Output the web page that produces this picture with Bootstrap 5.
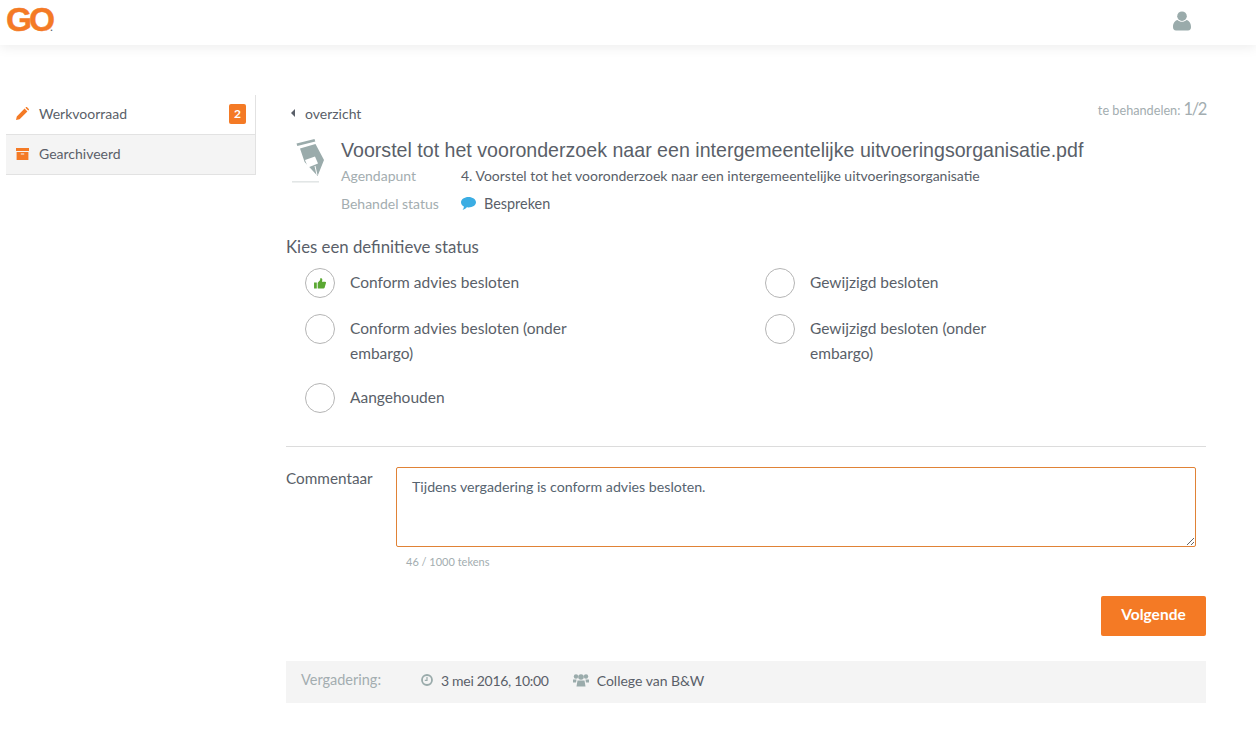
<!DOCTYPE html>
<html lang="nl">
<head>
    <meta charset="UTF-8">
    <title>GO</title>
    <link rel="stylesheet" href="https://cdn.jsdelivr.net/npm/bootstrap@5.3.0/dist/css/bootstrap.min.css">
    <style>
        body { font-family: Lato, "Open Sans", sans-serif; font-size: 15.5px; color: #5a5f69; background: #fff; }
        .topbar { height: 45px; box-shadow: 0 2px 12px rgba(0,0,0,.08); padding: 0 0 0 6px; }
        .logo-go { font-family: "Liberation Sans", sans-serif; font-weight: 700; font-size: 33.5px; line-height: 1; color: #f47a25; letter-spacing: -3px; margin-top: -5px; -webkit-text-stroke: .4px #f47a25; }
        .logo-dot { font-size: 9px; color: #5a5f69; letter-spacing: 0; margin-left: -2px; -webkit-text-stroke: 0; }
        .user-btn { margin-right: 65px; margin-top: -5px; }
        .side-nav { width: 250px; margin: 50px 0 0 6px; flex: none; border-right: 1px solid #e2e2e2; align-self: flex-start; font-size: 14px; }
        .side-item { height: 40px; padding: 0 9px 2px 10px; border-bottom: 1px solid #e2e2e2; gap: 10px; color: #5a5f69; text-decoration: none; }
        .side-item.is-alt { background: #f4f4f4; }
        .count-box { width: 17px; height: 20px; border-radius: 2px; background: #f47a25; color: #fff; font-size: 12px; font-weight: 700; }
        .main-col { width: 920px; margin-left: 30px; flex: none; }
        .crumb-row { height: 30px; margin-top: 53px; }
        .crumb-link { color: #5a5f69; text-decoration: none; gap: 10px; padding-left: 5px; font-size: 14px; }
        .todo-info { color: #a3adb0; font-size: 12.7px; margin-top: -7px; }
        .todo-info span { font-size: 16.5px; letter-spacing: -1.4px; }
        .doc-head { gap: 15px; padding: 10px 0 0 5px; }
        .doc-title { font-family: "Liberation Sans", sans-serif; font-size: 19.63px; line-height: 24px; margin: 0; font-weight: 400; color: #5a5f69; }
        .meta-row { line-height: 27px; font-size: 14px; }
        .meta-row + .meta-row { margin-top: 1px; }
        .meta-label { width: 120px; color: #a3adb0; flex: none; }
        .status-name { font-size: 14.4px; }
        .status-title { font-size: 16.8px; line-height: 24px; margin: 18px 0 9px; font-weight: 400; }
        .choice-grid { display: grid; grid-template-columns: 460px 460px; padding-left: 19px; }
        .choice { gap: 15px; min-height: 46px; line-height: 25px; }
        .choice-circle { width: 30px; height: 30px; border: 1px solid #b5b5b5; border-radius: 50%; flex: none; }
        .choice-text { width: 235px; padding-top: 2px; }
        .choice-tall { min-height: 69px; }
        .divider { border: 0; border-top: 1px solid #dcdcdc; margin: 17px 0 20px; opacity: 1; }
        .comment-label { width: 110px; flex: none; font-size: 15.3px; line-height: 22px; }
        .comment-box { width: 800px; height: 80px; border: 1px solid #e08236; border-radius: 2px; padding: 9px 15px; font-size: 14.2px; color: #566470; line-height: 20px; font-family: inherit; display: block; outline: 0; }
        .char-count { color: #a3adb0; font-size: 11px; margin: 8px 0 0 120px; line-height: 14px; }
        .btn-next { width: 105px; height: 40px; background: #f47a25; border: 0; border-radius: 2px; color: #fff; font-weight: 700; font-size: 15.5px; margin-top: 27px; padding: 0 0 3px; }
        .meeting-bar { height: 42px; background: #f4f4f4; margin-top: 25px; padding: 0 0 4px 15px; font-size: 14px; }
        .meeting-label { width: 120px; color: #a3adb0; font-size: 14.5px; }
        .meeting-date { letter-spacing: -.3px; }
    </style>
</head>
<body>
    <!-- top bar -->
    <nav class="topbar d-flex justify-content-between align-items-center">
        <div class="logo-go">GO<span class="logo-dot">.</span></div>
        <div class="user-btn">
            <svg width="18" height="20" viewBox="0 0 18 20"><circle cx="9" cy="5.2" r="4.8" fill="#9aabab"/><path d="M0 16c0-4 2-6.500 4.500-7 1.200 1.200 2.800 1.800 4.500 1.800s3.300-.6 4.500-1.800c2.500.5 4.500 3 4.500 7 0 2-1 3.500-3 3.500H3c-2 0-3-1.500-3-3.500z" fill="#9aabab"/></svg>
        </div>
    </nav>

    <div class="d-flex">
        <!-- side menu -->
        <div class="side-nav">
            <a class="side-item d-flex align-items-center" href="#">
                <svg width="13" height="13" viewBox="0 0 13 13"><path d="M0 13l.8-3.600L8.600 1.600l2.800 2.800-7.800 7.800zM9.400.8l.6-.6c.4-.3.8-.3 1.100 0l1.700 1.700c.3.300.3.700 0 1.100l-.6.6z" fill="#f47a25"/></svg>
                <span class="flex-grow-1">Werkvoorraad</span>
                <span class="count-box d-flex align-items-center justify-content-center">2</span>
            </a>
            <a class="side-item is-alt d-flex align-items-center" href="#">
                <svg width="13" height="12" viewBox="0 0 13 12"><path d="M0 0h13v3H0zM.6 4h11.800v8H.6z" fill="#f47a25"/><rect x="4.800" y="5.500" width="3.400" height="1" fill="#f4f4f4"/></svg>
                <span>Gearchiveerd</span>
            </a>
        </div>

        <main class="main-col">
            <div class="crumb-row d-flex justify-content-between align-items-center">
                <a class="crumb-link d-flex align-items-center" href="#">
                    <svg width="4" height="8" viewBox="0 0 4 8"><path d="M4 0v8L0 4z" fill="#5a5f69"/></svg>
                    <span>overzicht</span>
                </a>
                <div class="todo-info">te behandelen: <span>1/2</span></div>
            </div>

            <div class="doc-head d-flex">
                <!-- pen nib document icon -->
                <svg width="35" height="45" viewBox="0 -1 35 45" class="flex-shrink-0">
                    <path d="M5.500 4.500 23.500 0l.8 2.500-18 4.500z" fill="#9aabab"/>
                    <path d="M9 9.500 24.500 5 33 21l-6 15-.4 1-13-14z" fill="#9aabab"/>
                    <path d="M14 21l10-3.500 3 7-10 4z" fill="#fff"/>
                    <path d="M24 27 26 36" stroke="#fff" stroke-width="1" fill="none"/>
                    <path d="M1 42.500h27v.8H1z" fill="#c5cdcd"/>
                </svg>
                <div class="flex-grow-1">
                    <h1 class="doc-title">Voorstel tot het vooronderzoek naar een intergemeentelijke uitvoeringsorganisatie.pdf</h1>
                    <div class="meta-row d-flex">
                        <div class="meta-label">Agendapunt</div>
                        <div>4. Voorstel tot het vooronderzoek naar een intergemeentelijke uitvoeringsorganisatie</div>
                    </div>
                    <div class="meta-row d-flex">
                        <div class="meta-label">Behandel status</div>
                        <div class="d-flex align-items-center gap-2">
                            <svg width="15" height="13" viewBox="0 0 15 13"><path d="M7.500 0C11.600 0 15 2.300 15 5.200s-3.400 5.200-7.500 5.200c-.6 0-1.200 0-1.700-.1C4.700 11.600 3 12.600 1.500 13c.8-1 1.300-2 1.400-3.600C1.100 8.500 0 6.900 0 5.200 0 2.300 3.400 0 7.500 0z" fill="#3bade3"/></svg>
                            <span class="status-name">Bespreken</span>
                        </div>
                    </div>
                </div>
            </div>

            <h2 class="status-title">Kies een definitieve status</h2>
            <div class="choice-grid">
                <div class="choice d-flex">
                    <div class="choice-circle d-flex align-items-center justify-content-center">
                        <svg width="12" height="11" viewBox="0 0 13 12"><path d="M0 5h3v6.500H0zM4 5.200 6.500 2.500 7 0c1.500 0 2.200 1 2 2.500L8.600 4H12c1 0 1.300.8 1 1.500l-1.500 5.200c-.2.600-.6.800-1.200.8H4z" fill="#5aa832"/></svg>
                    </div>
                    <div class="choice-text">Conform advies besloten</div>
                </div>
                <div class="choice d-flex">
                    <div class="choice-circle"></div>
                    <div class="choice-text">Gewijzigd besloten</div>
                </div>
                <div class="choice choice-tall d-flex">
                    <div class="choice-circle"></div>
                    <div class="choice-text">Conform advies besloten (onder embargo)</div>
                </div>
                <div class="choice choice-tall d-flex">
                    <div class="choice-circle"></div>
                    <div class="choice-text">Gewijzigd besloten (onder embargo)</div>
                </div>
                <div class="choice d-flex">
                    <div class="choice-circle"></div>
                    <div class="choice-text">Aangehouden</div>
                </div>
            </div>

            <hr class="divider">

            <div class="d-flex">
                <label class="comment-label" for="comment">Commentaar</label>
                <textarea class="comment-box" id="comment">Tijdens vergadering is conform advies besloten.</textarea>
            </div>
            <div class="char-count">46 / 1000 tekens</div>

            <div class="d-flex justify-content-end">
                <button class="btn btn-next" type="button">Volgende</button>
            </div>

            <div class="meeting-bar d-flex align-items-center">
                <div class="meeting-label">Vergadering:</div>
                <svg width="12" height="12" viewBox="0 0 12 12" class="me-2"><circle cx="6" cy="6" r="5" fill="none" stroke="#9aabab" stroke-width="1.800"/><path d="M6 3v3.300H3.800" fill="none" stroke="#9aabab" stroke-width="1.200"/></svg>
                <span class="meeting-date">3 mei 2016, 10:00</span>
                <svg width="16" height="14" viewBox="0 0 16 13" class="ms-4 me-2"><circle cx="3" cy="3" r="2.200" fill="#9aabab"/><circle cx="13" cy="3" r="2.200" fill="#9aabab"/><circle cx="8" cy="3.500" r="2.800" fill="#9aabab"/><path d="M0 6h3.500L3 9H0zM16 6h-3.500l.5 3h3zM4.500 7h7l1 6h-9z" fill="#9aabab"/></svg>
                <span>College van B&amp;W</span>
            </div>
        </main>
    </div>
    <script src="https://cdn.jsdelivr.net/npm/bootstrap@5.3.0/dist/js/bootstrap.bundle.min.js"></script>
</body>
</html>
